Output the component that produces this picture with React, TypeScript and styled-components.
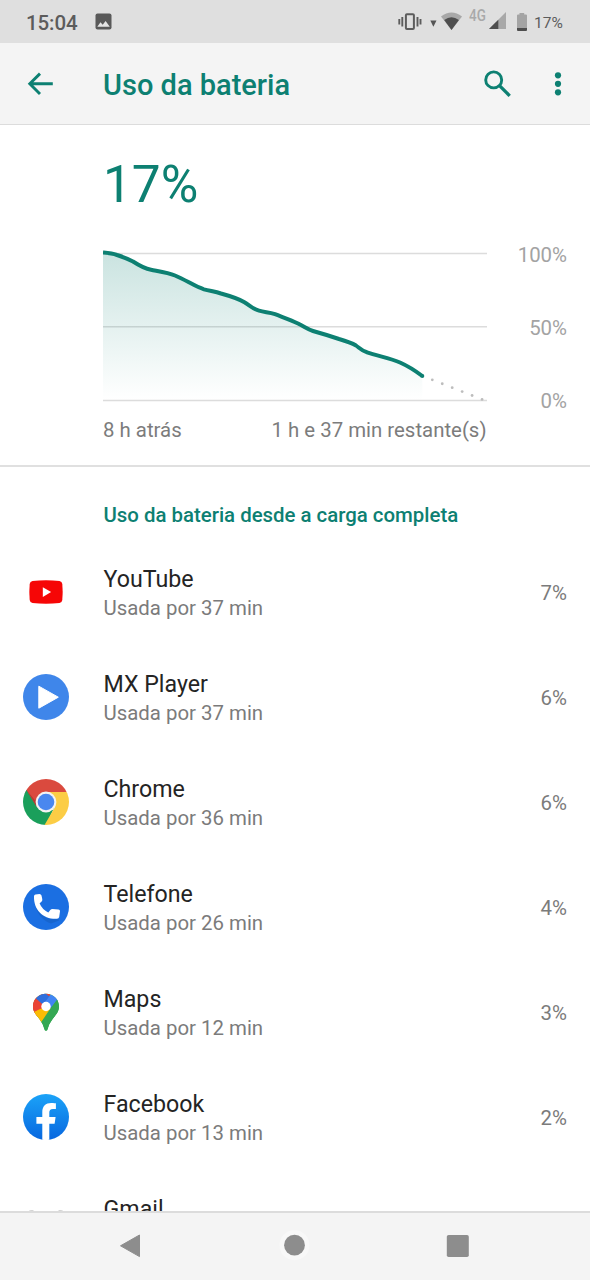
import React from "react";
import styled, { createGlobalStyle } from "styled-components";

const Global = createGlobalStyle`
  * { box-sizing: border-box; }
  body { margin: 0; background: #fff; }
`;

const teal = "#0d8072";

const Screen = styled.div`
  width: 590px;
  height: 1280px;
  display: flex;
  flex-direction: column;
  overflow: hidden;
  background: #fff;
  font-family: Roboto, sans-serif;
  svg { display: block; flex: none; }
`;

const StatusBar = styled.header`
  height: 43px;
  flex: none;
  display: flex;
  align-items: center;
  background: #dfdfdf;
  color: #5c5c5c;
  padding: 0 26px;
`;

const Clock = styled.span`
  font-size: 20.5px;
  font-weight: 500;
  line-height: 24px;
  letter-spacing: -0.1px;
  margin: 2px 17px 0 0;
  width: 52px;
  white-space: nowrap;
`;

const StatusRight = styled.div`
  margin-left: auto;
  display: flex;
  align-items: flex-start;
  height: 43px;
`;

const Network = styled.span`
  font-size: 16px;
  font-weight: 500;
  line-height: 18px;
  color: #a9a9a9;
  width: 19px;
  margin-left: 3px;
  padding-top: 7px;
  white-space: nowrap;
  transform: scaleX(0.84);
  transform-origin: left;
`;

const Level = styled.span`
  font-size: 15.5px;
  line-height: 18px;
  margin-left: 2px;
  padding-top: 14px;
  width: 30px;
  white-space: nowrap;
`;

const AppBar = styled.nav`
  height: 82px;
  flex: none;
  display: flex;
  align-items: center;
  background: #f4f4f4;
  border-bottom: 1px solid #dcdcdc;
  padding: 0 15px 0 22px;
`;

const Title = styled.h1`
  margin: 3px auto 0 46px;
  font-size: 29px;
  font-weight: 500;
  line-height: 36px;
  color: ${teal};
  white-space: nowrap;
`;

const Summary = styled.section`
  height: 342px;
  flex: none;
  padding: 30px 23px 0 103px;
  border-bottom: 2px solid #e0e0e0;
`;

const BigLevel = styled.div`
  font-size: 51.3px;
  line-height: 60px;
  color: ${teal};
  white-space: nowrap;
`;

const ChartRow = styled.div`
  display: flex;
  justify-content: space-between;
  margin-top: 32px;
  height: 164px;
`;

const Axis = styled.div`
  display: flex;
  flex-direction: column;
  justify-content: space-between;
  align-items: flex-end;
  height: 170px;
  margin-top: -4px;
  font-size: 20.4px;
  line-height: 24px;
  color: #a3a3a3;
`;

const Range = styled.div`
  display: flex;
  justify-content: space-between;
  width: 383.5px;
  margin-top: 7px;
  font-size: 20.4px;
  line-height: 24px;
  color: #7c7c7c;
  white-space: nowrap;
`;

const Apps = styled.main`
  height: 744px;
  flex: none;
  overflow: hidden;
`;

const SectionTitle = styled.h2`
  margin: 0;
  height: 73px;
  padding: 36px 0 0 103.5px;
  font-size: 20.4px;
  font-weight: 500;
  line-height: 24px;
  color: ${teal};
  white-space: nowrap;
`;

const Row = styled.div`
  height: 105px;
  display: flex;
  align-items: center;
  padding: 0 23px;
  > svg { margin-bottom: 1px; }
`;

const Labels = styled.div`
  margin-left: 34.5px;
  flex: 1;
`;

const Name = styled.div`
  font-size: 23.2px;
  line-height: 30px;
  color: #242424;
`;

const Usage = styled.div`
  font-size: 20.4px;
  line-height: 28px;
  color: #7b7b7b;
`;

const Share = styled.div`
  font-size: 20.4px;
  line-height: 24px;
  color: #7b7b7b;
`;

const NavBar = styled.footer`
  height: 69px;
  flex: none;
  display: flex;
  justify-content: space-between;
  background: #f4f4f4;
  border-top: 2px solid #dcdcdc;
  padding: 15px 113px 0 112px;
`;

const StatusIcons = () => (
  <svg width="74" height="43" viewBox="392 0 74 43">
    <rect x="405.9" y="14.3" width="8" height="14.6" rx="1" fill="none" stroke="#5c5c5c" strokeWidth="2" />
    <path d="M402.3 17v9.5M417.5 17v9.5M399.3 19v5.5M420.5 19v5.5" stroke="#5c5c5c" strokeWidth="1.9" />
    <path d="M430.3 20.5h6.2l-3.1 6.3z" fill="#555" />
    <path d="M441 16.4Q451.5 8.6 462 16.4L451.5 30z" fill="#a8a8a8" />
    <path d="M444.2 20Q451.5 14.6 458.9 20L451.5 30z" fill="#4e4e4e" />
  </svg>
);

const SignalIcons = () => (
  <svg width="44" height="43" viewBox="488 0 44 43">
    <path d="M489 29L506 12v17z" fill="#a8a8a8" />
    <path d="M489 29l9.3-9.3V29z" fill="#4e4e4e" />
    <path d="M517 15.5q0-1 1-1h1.5V13h4.7v1.5h1.8q1 0 1 1V28h-10z" fill="#a4a4a4" />
    <path d="M517 28h10v2q0 1-1 1h-8q-1 0-1-1z" fill="#4e4e4e" />
  </svg>
);

const curve =
  "M0 5.5C6 6 9 6.2 14 8C21 10.2 25 12 30 14.5C37 19 41 21.5 48 22.8C57 24.5 65 25.5 72 28.5C83 33 92 39.5 101 42.3C107 44 112 44.5 118 46.5C127 49 134 51 141 55C147 58.5 150 62 156 63.7C162 65.5 166 65 172 67.2C179 70 188 73 195 76.5C202 80 205 82.5 210 84C219 86.5 227 89 236 92C243 94 248 95.5 253 98.5C257 101.5 259 104 264 105.3C275 109 288 111.5 297 115.5C306 119.5 312 123.5 319.3 129";

const BatteryChart = () => (
  <svg width="384" height="164" viewBox="0 0 384 164">
    <defs>
      <linearGradient id="fade" x1="0" y1="5" x2="0" y2="153" gradientUnits="userSpaceOnUse">
        <stop stopColor={teal} stopOpacity="0.22" />
        <stop offset="1" stopColor={teal} stopOpacity="0" />
      </linearGradient>
    </defs>
    <path d="M0 6.5h384M0 79.7h384M0 153.5h384" stroke="#dcdcdc" strokeWidth="1.5" />
    <path d={curve + "V153H0z"} fill="url(#fade)" />
    <path d={curve} fill="none" stroke={teal} strokeWidth="4" strokeLinejoin="round" />
    <circle cx="319.3" cy="129" r="2" fill={teal} />
    {[0, 1, 2, 3, 4, 5].map((i) => (
      <circle key={i} cx={329.3 + i * 9.95} cy={132.8 + i * 3.93} r="1.4" fill="#bdbdbd" />
    ))}
  </svg>
);

const YouTubeIcon = () => (
  <svg width="46" height="46" viewBox="0 0 46 46">
    <path d="M9.5 12Q23 10.4 36.5 12Q39 12.4 39.3 15Q40.1 23 39.3 31Q39 33.6 36.5 34Q23 35.6 9.5 34Q7 33.6 6.7 31Q5.9 23 6.7 15Q7 12.4 9.5 12z" fill="#f60606" />
    <path d="M19.8 18.2v9.8l8.3-4.9z" fill="#fff" />
  </svg>
);

const PlayerIcon = () => (
  <svg width="46" height="46" viewBox="0 0 46 46">
    <circle cx="23" cy="23" r="23" fill="#3f86ea" />
    <path d="M15.8 12.2v22l19.5-11z" fill="#fff" stroke="#fff" strokeWidth="1" strokeLinejoin="round" />
  </svg>
);

const ChromeIcon = () => (
  <svg width="46" height="46" viewBox="0 0 46 46">
    <defs>
      <clipPath id="disc"><circle cx="23" cy="23" r="23" /></clipPath>
    </defs>
    <g clipPath="url(#disc)">
      <path d="M0 0H46V13H23L14 28L0 11z" fill="#da4a3e" />
      <path d="M3.5 11L14 28L23 33L31.5 28L21 50H0V11z" fill="#1a9f5b" />
      <path d="M23 13H46V46H21.5L32 28z" fill="#fccd45" />
      <path d="M3.5 11L14 28.5L12.5 22z" fill="#b63b32" />
    </g>
    <circle cx="23" cy="23" r="10.4" fill="#f3f3f3" />
    <circle cx="23" cy="23" r="8.3" fill="#4a87ef" />
  </svg>
);

const PhoneIcon = () => (
  <svg width="46" height="46" viewBox="0 0 46 46">
    <circle cx="23" cy="23" r="23" fill="#1b6fe2" />
    <path d="M11.5 19C13.5 27 20.5 34.5 29 35L35.5 35L36 36.5L28 39.5Q15 35 11.5 19z" fill="#1558b5" opacity="0.45" />
    <path d="M12.5 10.6L16.5 10Q18 10 18.5 11.5L19.3 15.3Q19.6 17 18.2 18L16.6 19.3Q19 25.5 25.3 28.4L27.3 26Q28.2 24.9 29.6 25L35.5 25.4Q37.1 25.6 37 27.2L36.2 33Q35.8 34.8 34 34.8C20.500 35.500 10.500 26 11 12.200Q11.100 10.800 12.500 10.600z" fill="#fff" />
  </svg>
);

const MapsIcon = () => (
  <svg width="46" height="46" viewBox="0 0 46 46">
    <defs>
      <clipPath id="pin">
        <path d="M23 4.8C30.5 4.8 36 10.5 36 17.5C36 26 27.5 29 24.8 39.5Q24.3 41.8 23 41.8Q21.7 41.8 21.2 39.5C18.5 29 10 26 10 17.5C10 10.5 15.5 4.8 23 4.8z" />
      </clipPath>
    </defs>
    <g clipPath="url(#pin)">
      <path d="M8 0h30v46H8z" fill="#34a853" />
      <path d="M10 3H28L23 17.5L13 29H6V8z" fill="#ea4335" />
      <path d="M11 30L6 27L20 13L29 20L18 33.5z" fill="#fbbc04" />
      <path d="M6 8L13 8L23 17.5L15 21L9 24z" fill="#ea4335" />
      <path d="M13 9.5L20 15.8L27 8L18 1z" fill="#2f6fdc" />
      <path d="M20 15.8L28 5V0H38V8L27 20z" fill="#4285f4" />
      <path d="M27 20L34.5 10L40 12V46H23L18 33.5z" fill="#34a853" />
    </g>
    <circle cx="23" cy="17.5" r="4.7" fill="#fff" />
  </svg>
);

const FacebookIcon = () => (
  <svg width="46" height="46" viewBox="0 0 46 46">
    <defs>
      <linearGradient id="fb" x1="0" y1="0" x2="0" y2="1">
        <stop stopColor="#1ba3f8" />
        <stop offset="1" stopColor="#0867df" />
      </linearGradient>
    </defs>
    <circle cx="23" cy="23" r="23" fill="url(#fb)" />
    <path d="M19.3 45.7V29.7H13.4V23h5.9v-5.1c0-5.8 3.5-9 8.8-9 2.5 0 4.8.4 4.8.4V15H30c-2.9 0-3.7 1.8-3.7 3.6V23h6.3l-1 6.7h-5.3v16q-3.5.5-7 0z" fill="#fff" />
  </svg>
);

const GmailIcon = () => (
  <svg width="46" height="46" viewBox="0 0 46 46">
    <path d="M5 9.5q0-3.3 3-3.3h2L23 17 36 6.2h2q3 0 3 3.3V36H5z" fill="#c8c8c8" />
    <path d="M10 7.2h26L23 17z" fill="#efefef" />
  </svg>
);

const apps = [
  { name: "YouTube", minutes: 37, share: "7%", icon: <YouTubeIcon /> },
  { name: "MX Player", minutes: 37, share: "6%", icon: <PlayerIcon /> },
  { name: "Chrome", minutes: 36, share: "6%", icon: <ChromeIcon /> },
  { name: "Telefone", minutes: 26, share: "4%", icon: <PhoneIcon /> },
  { name: "Maps", minutes: 12, share: "3%", icon: <MapsIcon /> },
  { name: "Facebook", minutes: 13, share: "2%", icon: <FacebookIcon /> },
];

const GmailRow = styled(Row)`
  align-items: flex-start;
  padding-top: 24px;
  > svg { margin-top: 9.5px; }
`;

export default function App() {
  return (
    <Screen>
      <Global />
      <StatusBar>
        <Clock>15:04</Clock>
        <svg width="17" height="17" viewBox="0 0 17 17">
          <rect x="0.5" y="0.5" width="16" height="16" rx="2" fill="#595959" />
          <path d="M2.3 13.7L5.5 9.3L7.7 11.7L10.6 8L14.8 13.7z" fill="#e4e4e4" />
        </svg>
        <StatusRight>
          <StatusIcons />
          <Network>4G</Network>
          <SignalIcons />
          <Level>17%</Level>
        </StatusRight>
      </StatusBar>
      <AppBar>
        <svg width="35" height="35" viewBox="0 0 35 35">
          <path d="M30.8 17.8H8.5M18 7.6L7.8 17.8L18 28" fill="none" stroke={teal} strokeWidth="2.9" />
        </svg>
        <Title>Uso da bateria</Title>
        <svg width="96" height="35" viewBox="479 66 96 35">
          <circle cx="493.7" cy="79.9" r="8" fill="none" stroke={teal} strokeWidth="2.9" />
          <path d="M499.5 85.7L509.7 95.9" stroke={teal} strokeWidth="3.3" />
          <circle cx="558" cy="75.3" r="3.1" fill={teal} />
          <circle cx="558" cy="83.8" r="3.1" fill={teal} />
          <circle cx="558" cy="92.3" r="3.1" fill={teal} />
        </svg>
      </AppBar>
      <Summary>
        <BigLevel>17%</BigLevel>
        <ChartRow>
          <BatteryChart />
          <Axis>
            <span>100%</span>
            <span>50%</span>
            <span>0%</span>
          </Axis>
        </ChartRow>
        <Range>
          <span>8 h atrás</span>
          <span>1 h e 37 min restante(s)</span>
        </Range>
      </Summary>
      <Apps>
        <SectionTitle>Uso da bateria desde a carga completa</SectionTitle>
        {apps.map((app) => (
          <Row key={app.name}>
            {app.icon}
            <Labels>
              <Name>{app.name}</Name>
              <Usage>Usada por {app.minutes} min</Usage>
            </Labels>
            <Share>{app.share}</Share>
          </Row>
        ))}
        <GmailRow>
          <GmailIcon />
          <Labels>
            <Name>Gmail</Name>
          </Labels>
        </GmailRow>
      </Apps>
      <NavBar>
        <svg width="35" height="35" viewBox="112 1228 35 35">
          <path d="M120.5 1245.8L139.5 1235V1256.6z" fill="#8d8d8d" stroke="#8d8d8d" strokeWidth="1" strokeLinejoin="round" />
        </svg>
        <svg width="35" height="35" viewBox="0 0 35 35">
          <circle cx="17.5" cy="17.2" r="15" fill="#f8f8f8" />
          <circle cx="17.5" cy="17.2" r="10.4" fill="#8d8d8d" />
        </svg>
        <svg width="35" height="35" viewBox="0 0 35 35">
          <rect x="4.8" y="7" width="22" height="22" rx="1.8" fill="#8d8d8d" />
        </svg>
      </NavBar>
    </Screen>
  );
}
